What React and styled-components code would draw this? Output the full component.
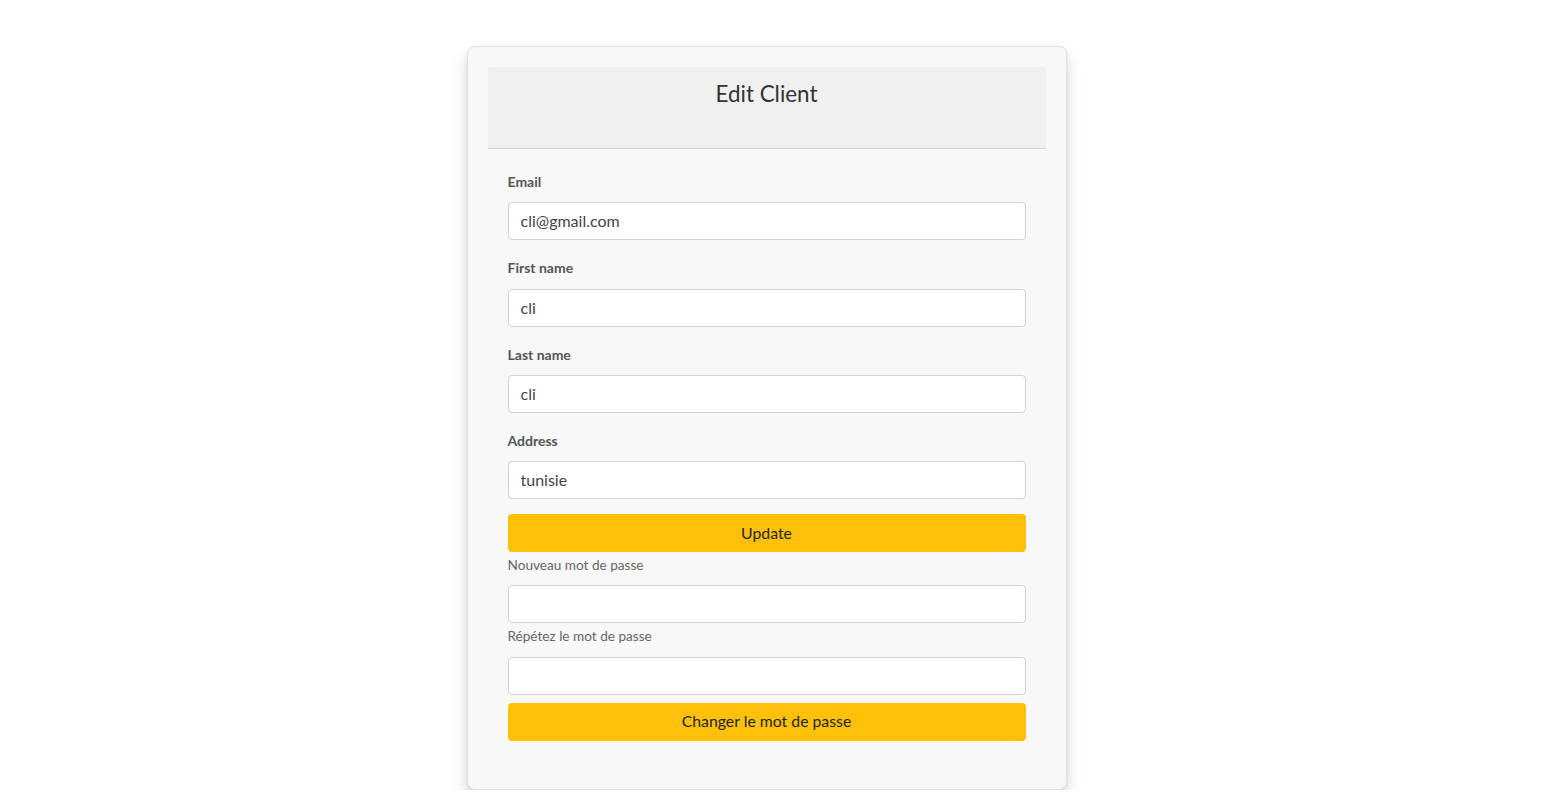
import React from 'react';
import styled, { createGlobalStyle } from 'styled-components';

const GlobalStyle = createGlobalStyle`
  body {
    margin: 0;
    background: #ffffff;
    font-family: Lato, 'Open Sans', sans-serif;
  }
`;

const Page = styled.div`
  display: flex;
  justify-content: center;
  padding: 46px 24px 0 0;
`;

const Card = styled.div`
  width: 600px;
  box-sizing: border-box;
  padding: 20px;
  background-color: #f8f8f8;
  border: 1px solid #e2e2e2;
  border-radius: 8px;
  box-shadow: 0 8px 16px rgba(0, 0, 0, 0.16), 0 1px 3px rgba(0, 0, 0, 0.06);
`;

const Header = styled.div`
  height: 82px;
  box-sizing: border-box;
  padding-top: 14px;
  background-color: #f0f0f0;
  border-bottom: 1px solid #d4d4d4;
  border-radius: 3px 3px 0 0;
  text-align: center;
`;

const Title = styled.h2`
  margin: 0;
  font-size: 22.4px;
  font-weight: 400;
  line-height: 26px;
  color: #333333;
`;

const Body = styled.form`
  padding: 23px 20px 28px;
`;

const Group = styled.div`
  margin-bottom: ${(p) => (p.$tight ? '15px' : '18px')};
`;

const Label = styled.label`
  display: block;
  font-size: ${(p) => (p.$light ? '13.6px' : '14px')};
  line-height: 20px;
  font-weight: ${(p) => (p.$light ? 400 : 700)};
  color: ${(p) => (p.$light ? '#666666' : '#555555')};
  margin-bottom: 10.3px;
`;

const Input = styled.input`
  display: block;
  width: 100%;
  height: 38px;
  box-sizing: border-box;
  padding: 0 12px 1px;
  font-family: Lato, 'Open Sans', sans-serif;
  font-size: 16px;
  color: #444444;
  background: #ffffff;
  border: 1px solid #ced4da;
  border-radius: 4px;
  outline: none;
`;

const Button = styled.button`
  display: block;
  width: 100%;
  height: 38px;
  margin-top: ${(p) => p.$top || '0'};
  padding: 0 0 2px;
  font-family: Lato, 'Open Sans', sans-serif;
  font-size: 15.8px;
  color: #212529;
  background-color: #ffc107;
  border: none;
  border-radius: 4px;
  cursor: pointer;
`;

const PassLabel = styled(Label)`
  margin-top: 3px;
`;

export default function App() {
  return (
    <>
      <GlobalStyle />
      <Page>
        <Card>
          <Header>
            <Title>Edit Client</Title>
          </Header>
          <Body onSubmit={(e) => e.preventDefault()}>
            <Group>
              <Label>Email</Label>
              <Input type="email" defaultValue="cli@gmail.com" />
            </Group>
            <Group>
              <Label>First name</Label>
              <Input type="text" defaultValue="cli" />
            </Group>
            <Group>
              <Label>Last name</Label>
              <Input type="text" defaultValue="cli" />
            </Group>
            <Group $tight>
              <Label>Address</Label>
              <Input type="text" defaultValue="tunisie" />
            </Group>
            <Button type="button">Update</Button>

            <PassLabel $light>Nouveau mot de passe</PassLabel>
            <Input type="password" />
            <PassLabel $light>Répétez le mot de passe</PassLabel>
            <Input type="password" />
            <Button type="button" $top="8px">Changer le mot de passe</Button>
          </Body>
        </Card>
      </Page>
    </>
  );
}
